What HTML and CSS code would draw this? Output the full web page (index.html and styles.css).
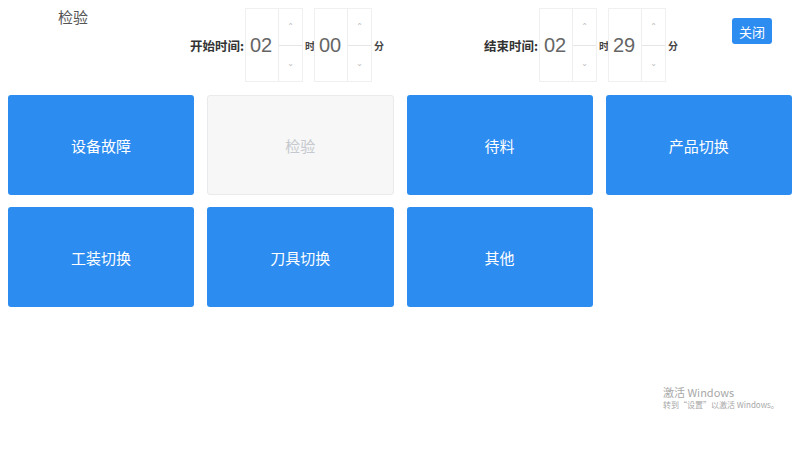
FILE: index.html
```html
<!DOCTYPE html>
<html lang="zh-CN">
<head>
<meta charset="utf-8">
<title>检验</title>
<link rel="stylesheet" href="styles.css">
</head>
<body>
<div class="header">
  <div class="title">检验</div>
  <div class="time-group start">
    <span class="label">开始时间:</span>
    <div class="spinner">
      <div class="value">02</div>
      <div class="arrows"><span class="up">&#8963;</span><span class="down">&#8964;</span></div>
    </div>
    <span class="unit">时</span>
    <div class="spinner">
      <div class="value">00</div>
      <div class="arrows"><span class="up">&#8963;</span><span class="down">&#8964;</span></div>
    </div>
    <span class="unit">分</span>
  </div>
  <div class="time-group end">
    <span class="label">结束时间:</span>
    <div class="spinner">
      <div class="value">02</div>
      <div class="arrows"><span class="up">&#8963;</span><span class="down">&#8964;</span></div>
    </div>
    <span class="unit">时</span>
    <div class="spinner">
      <div class="value">29</div>
      <div class="arrows"><span class="up">&#8963;</span><span class="down">&#8964;</span></div>
    </div>
    <span class="unit">分</span>
  </div>
  <button class="close">关闭</button>
</div>
<div class="grid">
  <div class="tile">设备故障</div>
  <div class="tile disabled">检验</div>
  <div class="tile">待料</div>
  <div class="tile">产品切换</div>
  <div class="tile">工装切换</div>
  <div class="tile">刀具切换</div>
  <div class="tile">其他</div>
</div>
<div class="watermark">
  <div class="wm1">激活 Windows</div>
  <div class="wm2">转到“设置”以激活 Windows。</div>
</div>
</body>
</html>
```
FILE: styles.css
```css
html, body {
  margin: 0;
  padding: 0;
  background: #ffffff;
}
body {
  padding: 8px;
  font-family: "Noto Sans CJK SC", "Noto Sans", sans-serif;
  color: #333;
  position: relative;
  height: 434px;
  box-sizing: border-box;
}
.header {
  display: flex;
  align-items: center;
  height: 74px;
  margin-bottom: 13px;
}
.title {
  align-self: flex-start;
  margin-left: 50px;
  width: 30px;
  font-size: 15px;
  line-height: 17px;
  color: #555;
}
.time-group {
  display: flex;
  align-items: center;
  height: 74px;
}
.time-group.start {
  margin-left: 102px;
}
.time-group.end {
  margin-left: 101px;
}
.label {
  font-size: 12.5px;
  font-weight: bold;
  color: #333;
  width: 55px;
}
.spinner {
  display: flex;
  width: 58px;
  height: 74px;
  box-sizing: border-box;
  border: 1px solid #f0f0f0;
}
.value {
  width: 32px;
  display: flex;
  align-items: center;
  padding-left: 4px;
  box-sizing: border-box;
  font-family: "Liberation Sans", Arial, sans-serif;
  font-size: 20px;
  color: #666;
}
.arrows {
  flex: 1;
  display: flex;
  flex-direction: column;
  border-left: 1px solid #eeeeee;
}
.arrows span {
  flex: 1;
  display: flex;
  align-items: center;
  justify-content: center;
  font-size: 8px;
  color: #bbb;
  font-family: "DejaVu Sans", sans-serif;
}
.arrows .up {
  border-bottom: 1px solid #e6e6e6;
}
.unit {
  font-size: 10px;
  font-weight: bold;
  color: #444;
  width: 9px;
  padding-left: 2px;
}
.close {
  margin-left: auto;
  margin-right: 20px;
  align-self: flex-start;
  margin-top: 10px;
  width: 40px;
  height: 26px;
  border: none;
  border-radius: 3px;
  background: #2d8cf0;
  color: #fff;
  font-family: "Noto Sans CJK SC", sans-serif;
  font-size: 13px;
  padding: 0;
}
.grid {
  display: grid;
  grid-template-columns: repeat(4, 1fr);
  grid-auto-rows: 100px;
  column-gap: 13px;
  row-gap: 12px;
}
.tile {
  background: #2d8cf0;
  color: #fff;
  border-radius: 3px;
  display: flex;
  align-items: center;
  justify-content: center;
  font-size: 15px;
}
.tile.disabled {
  background: #f7f7f7;
  border: 1px solid #e8eaec;
  color: #c5c8ce;
}
.watermark {
  position: absolute;
  left: 663px;
  top: 385px;
  color: #a8a8a8;
}
.wm1 {
  font-size: 11px;
  line-height: 14px;
}
.wm2 {
  font-size: 8px;
  line-height: 12px;
}
```
